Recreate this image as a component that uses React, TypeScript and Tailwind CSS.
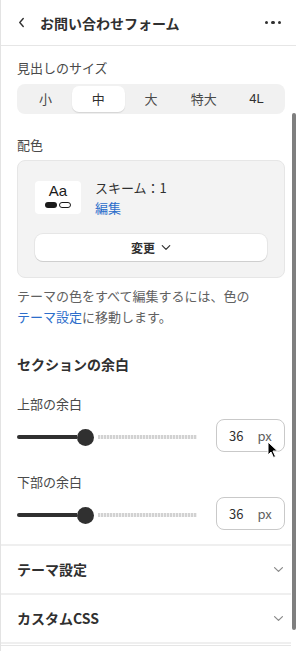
import React from "react";

const ChevronDown = ({ className = "" }: { className?: string }) => (
  <svg viewBox="0 0 12 8" className={className} fill="none" stroke="currentColor" strokeWidth="1.4" strokeLinecap="round" strokeLinejoin="round">
    <path d="M1.5 1.8 6 6.2l4.5-4.4" />
  </svg>
);

const Slider = () => (
  <div className="flex-1 flex items-center h-[16px] mt-[3px]">
    <div className="w-[60px] h-[4px] rounded-l-full bg-[#303030]" />
    <div className="w-[17px] h-[17px] rounded-full bg-[#303030] shrink-0" />
    <div className="flex-1 ml-[4px] mr-[2px] h-[4px] bg-[repeating-linear-gradient(90deg,#d2d2d2_0_2px,#f0f0f0_2px_3px)]" />
  </div>
);

const PxInput = () => (
  <div className="w-[69px] h-[33px] border border-[#c9c9c9] rounded-[8px] flex items-center pl-[12px] text-[13px]">
    <span className="text-[#303030]">36</span>
    <span className="ml-[14px] text-[#616161]">px</span>
  </div>
);

export default function App() {
  const sizes = ["小", "中", "大", "特大", "4L"];
  return (
    <div className="relative w-[296px] h-[651px] overflow-hidden bg-white border-l border-[#e3e3e3] font-['Noto_Sans_CJK_JP','Noto_Sans',sans-serif] text-[#303030]">
      {/* header */}
      <div className="h-[46px] border-b border-[#e6e6e6] flex items-center pl-[17px] pr-[15px]">
        <svg viewBox="0 0 8 12" className="w-[7px] h-[11px] text-[#303030]" fill="none" stroke="currentColor" strokeWidth="1.6" strokeLinecap="round" strokeLinejoin="round">
          <path d="M6 1.5 2 6l4 4.5" />
        </svg>
        <div className="ml-[15px] text-[14px] font-bold leading-5">お問い合わせフォーム</div>
        <div className="ml-auto flex gap-[3px]">
          <span className="w-[3.5px] h-[3.5px] rounded-full bg-[#303030]" />
          <span className="w-[3.5px] h-[3.5px] rounded-full bg-[#303030]" />
          <span className="w-[3.5px] h-[3.5px] rounded-full bg-[#303030]" />
        </div>
      </div>

      {/* body */}
      <div className="pl-[16px] pr-[11px]">
        <div className="mt-[12px] text-[13px] leading-5 text-[#4a4a4a]">見出しのサイズ</div>
        <div className="mt-[6px] h-[30px] bg-[#f1f1f1] rounded-[8px] p-[2px] flex">
          {sizes.map((s) => (
            <div
              key={s}
              className={`flex-1 flex items-center justify-center text-[13px] rounded-[7px] ${
                s === "中" ? "bg-white shadow-[0_1px_1px_rgba(0,0,0,0.12)] text-[#303030]" : "text-[#4a4a4a]"
              } ${s === "4L" ? "font-['Liberation_Sans',sans-serif] font-medium text-[#303030]" : ""}`}
            >
              {s}
            </div>
          ))}
        </div>

        <div className="mt-[21px] text-[13px] leading-5 text-[#4a4a4a]">配色</div>
        <div className="mt-[5px] border border-[#e6e6e6] bg-[#f3f3f3] rounded-[8px] pt-[20px] pl-[17px] pr-[17px] pb-[16px]">
          <div className="flex h-[33px]">
            <div className="w-[46px] h-[33px] bg-white rounded-[4px] flex flex-col items-center pt-[1px]">
              <div className="text-[15px] leading-[18px] font-['Liberation_Sans',sans-serif] text-[#1a1a1a]">Aa</div>
              <div className="flex gap-[2px] mt-[2px]">
                <span className="w-[12px] h-[6px] rounded-full bg-[#1a1a1a]" />
                <span className="w-[12px] h-[6px] rounded-full border border-[#1a1a1a]" />
              </div>
            </div>
            <div className="ml-[14px] flex flex-col h-[33px]">
              <div className="text-[13px] leading-[20px] -mt-[3px] text-[#303030]">スキーム：1</div>
              <div className="text-[13px] leading-[20px] text-[#2c6ecb]">編集</div>
            </div>
          </div>
          <div className="mt-[20px] h-[27px] bg-white rounded-[8px] shadow-[0_1px_0_#cfcfcf,0_0_0_1px_#e6e6e6] flex items-center justify-center gap-[6px]">
            <span className="text-[12px] font-semibold text-[#303030]">変更</span>
            <ChevronDown className="w-[10px] h-[7px] text-[#303030]" />
          </div>
        </div>

        <div className="mt-[7px] text-[13px] leading-[21px] text-[#616161]">
          テーマの色をすべて編集するには、色の
          <br />
          <span className="text-[#2c6ecb]">テーマ設定</span>に移動します。
        </div>

        <div className="mt-[27px] text-[14px] leading-5 font-bold text-[#303030]">セクションの余白</div>

        <div className="mt-[20px] text-[13px] leading-5 text-[#4a4a4a]">上部の余白</div>
        <div className="mt-[5px] flex items-center gap-[17px]">
          <Slider />
          <PxInput />
        </div>

        <div className="mt-[20px] text-[13px] leading-5 text-[#4a4a4a]">下部の余白</div>
        <div className="mt-[5px] flex items-center gap-[17px]">
          <Slider />
          <PxInput />
        </div>
      </div>

      <div className="mt-[14px] mr-[5px] border-t-2 border-[#efefef]">
        <div className="h-[47px] flex items-center pl-[16px] pr-[7px]">
          <span className="text-[14px] font-bold">テーマ設定</span>
          <ChevronDown className="ml-auto w-[11px] h-[7px] text-[#8a8a8a]" />
        </div>
        <div className="border-t-2 border-[#efefef] h-[49px] flex items-center pl-[16px] pr-[7px]">
          <span className="text-[14px] font-bold">カスタムCSS</span>
          <ChevronDown className="ml-auto w-[11px] h-[7px] text-[#8a8a8a]" />
        </div>
        <div className="border-t-2 border-[#efefef] h-[3px]" />
        <div className="border-t border-[#e6e6e6]" />
      </div>

      {/* scrollbar */}
      <div className="absolute right-0 top-[113px] w-[4px] h-[517px] rounded-full bg-[#7f7f7f]" />

      {/* mouse cursor */}
      <svg className="absolute left-[266px] top-[441px] w-[12px] h-[18px]" viewBox="0 0 12 18">
        <path d="M1 1 L1 14 L4 11 L6.5 16.5 L8.5 15.5 L6 10 L10.5 10 Z" fill="#000" stroke="#fff" strokeWidth="1" strokeLinejoin="round" />
      </svg>
    </div>
  );
}
